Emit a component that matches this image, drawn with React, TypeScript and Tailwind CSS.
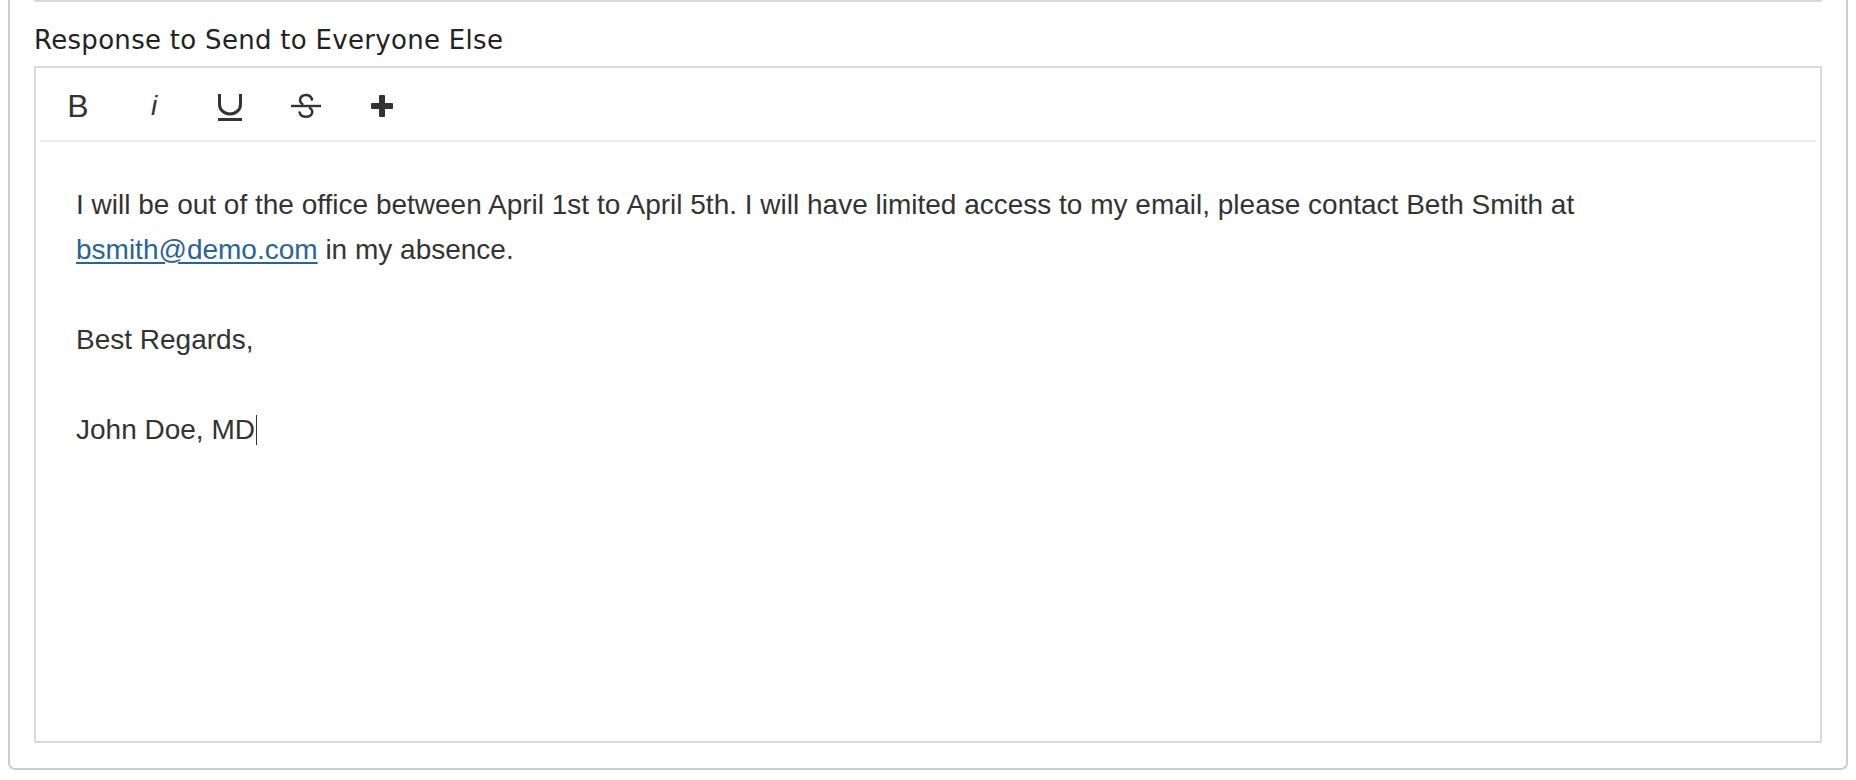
import React from "react";

function UnderlineIcon() {
  return (
    <svg width="26" height="30" viewBox="0 0 26 30" className="block">
      <path d="M2.5 1 V11.5 A10.5 9.5 0 0 0 23.5 11.5 V1" fill="none" stroke="#333" strokeWidth="3" />
      <rect x="1" y="25" width="24" height="3" fill="#333" />
    </svg>
  );
}

function StrikeIcon() {
  return (
    <svg width="32" height="26" viewBox="0 0 32 26" className="block">
      <path d="M22 6.5 C21 3.2 18.5 2 16 2 C12.5 2 10 4 10 7 C10 8.8 11 10.2 12.3 11" fill="none" stroke="#333" strokeWidth="2.6" strokeLinecap="round" />
      <path d="M20 15 C21.5 16 22.3 17.2 22.3 18.8 C22.3 21.8 19.6 23.8 16 23.8 C12.6 23.8 10.3 22.3 9.6 19.5" fill="none" stroke="#333" strokeWidth="2.6" strokeLinecap="round" />
      <rect x="1" y="11.8" width="30" height="2.4" fill="#333" />
    </svg>
  );
}

function PlusIcon() {
  return (
    <svg width="22" height="22" viewBox="0 0 22 22" className="block">
      <rect x="8" y="0" width="6" height="22" rx="1" fill="#333" />
      <rect x="0" y="8" width="22" height="6" rx="1" fill="#333" />
    </svg>
  );
}

export default function App() {
  const bodyFont = { fontFamily: '"Liberation Sans", Arial, Helvetica, sans-serif' };
  return (
    <div className="w-[1856px] h-[780px] bg-white pl-[8px] overflow-hidden">
      <div className="w-[1840px] h-[770px] border-2 border-t-0 border-[#cccccc] rounded-b-[7px] px-[24px] pb-[24px] flex flex-col">
        <div className="h-[2px] bg-[#d9d9d9]" />
        <div
          className="mt-[21px] h-[34px] leading-[34px] text-[26px] tracking-[0.3px] text-[#222222] whitespace-nowrap"
          style={{ fontFamily: '"DejaVu Sans", Verdana, sans-serif' }}
        >
          Response to Send to Everyone Else
        </div>
        <div className="mt-[9px] h-[677px] border-2 border-[#dadada] flex flex-col bg-white">
          <div className="h-[72px] mx-[4px] flex items-center pt-[4px] text-[#333333]" style={bodyFont}>
            <div className="w-[76px] flex justify-center">
              <span className="text-[32px] leading-none">B</span>
            </div>
            <div className="w-[76px] flex justify-center">
              <span className="text-[28px] leading-none italic">i</span>
            </div>
            <div className="w-[76px] flex justify-center pt-[3px]">
              <UnderlineIcon />
            </div>
            <div className="w-[76px] flex justify-center">
              <StrikeIcon />
            </div>
            <div className="w-[76px] flex justify-center">
              <PlusIcon />
            </div>
          </div>
          <div className="h-[2px] mx-[4px] bg-[#ececec]" />
          <div className="pt-[40px] px-[40px] text-[28px] leading-[45px] text-[#333333]" style={bodyFont}>
            <div className="whitespace-nowrap">
              I will be out of the office between April 1st to April 5th. I will have limited access to my email, please contact Beth Smith at
            </div>
            <div className="whitespace-nowrap">
              <a className="text-[#2a6496] underline underline-offset-[3px]" href="#">bsmith@demo.com</a> in my absence.
            </div>
            <div className="h-[45px]" />
            <div className="whitespace-nowrap">Best Regards,</div>
            <div className="h-[45px]" />
            <div className="whitespace-nowrap flex items-center">
              <span>John Doe, MD</span>
              <span className="inline-block w-px h-[30px] bg-[#333333] ml-[1px]" />
            </div>
          </div>
        </div>
      </div>
    </div>
  );
}
